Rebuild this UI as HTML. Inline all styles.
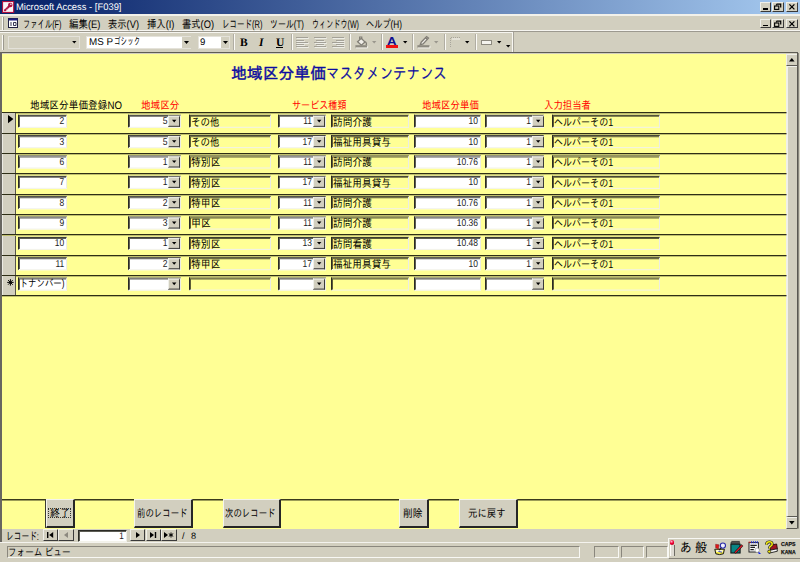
<!DOCTYPE html>
<html lang="ja"><head><meta charset="utf-8"><title>Microsoft Access - [F039]</title>
<style>
html,body{margin:0;padding:0;}
body{width:800px;height:562px;overflow:hidden;background:#d2cfbf;position:relative;
 font-family:"Liberation Sans","IPAGothic","Noto Sans CJK JP",sans-serif;font-size:11px;color:#000;}
div,span{box-sizing:border-box;}
.a{position:absolute;white-space:nowrap;}
.t{position:absolute;white-space:nowrap;line-height:12px;height:12px;transform-origin:0 0;transform:rotate(0.03deg);}
.tr{position:absolute;white-space:nowrap;line-height:12px;height:12px;text-align:right;font-size:10px;color:#1c1c1c;transform:scaleX(0.85) rotate(0.03deg);transform-origin:100% 0;}
.red{color:#ff0000;}
.sunk{position:absolute;border-style:solid;border-width:1px;border-color:#2a2a24 #ecece4 #f2f2ea #2a2a24;box-shadow:inset 1px 1px 0 rgba(30,30,20,0.72);}
.w{background:#fff;}
.y{background:#ffff95;}
.btn{position:absolute;background:#d2cfbf;border-style:solid;border-width:1px 2px 2px 1px;border-color:#f4f4ee #262626 #262626 #f4f4ee;}
.cbtn{position:absolute;background:#d2cfbf;border-style:solid;border-width:1px 1.4px 1.4px 1px;border-color:#f0f0ea #3a3a3a #3a3a3a #f0f0ea;}
.sb{border-right:0;border-bottom-color:#5c5a53;border-bottom-width:1px;}
.line{position:absolute;background:#2c2c18;height:1.2px;left:2px;width:784px;}
.sel{position:absolute;left:2px;width:14px;background:#d2cfbf;border-left:1px solid #ecebe4;border-right:1px solid #56544c;}
.sep{position:absolute;width:2px;border-left:1px solid #b0ada3;border-right:1px solid #fbfaf6;top:34px;height:16px;}
.pan{position:absolute;border-style:solid;border-width:1px;border-color:#8a877d #f8f8f4 #f8f8f4 #8a877d;top:546px;height:12px;}
svg{position:absolute;overflow:visible;}
</style></head><body>

<div class="a" style="left:0;top:0;width:800px;height:14px;background:linear-gradient(90deg,#0a246a 0%,#0c276d 6%,#a6caf0 100%);"></div>
<svg style="left:1.8px;top:0.9px" width="12.2" height="12" viewBox="0 0 12.2 12"><rect x="0" y="0" width="12.2" height="12" fill="#b01040"/><rect x="1.1" y="1.1" width="10" height="9.8" fill="#fbf4f6"/><path d="M3 9.3L7.2 5.2" stroke="#b01040" stroke-width="2.1" stroke-linecap="round" fill="none"/><path d="M3.4 7.4l1.2 1.2M4.6 6.3l1.1 1.1" stroke="#fbf4f6" stroke-width="0.5"/><circle cx="8.3" cy="4" r="2.3" fill="#b01040"/><circle cx="8.9" cy="3.3" r="0.75" fill="#fbf4f6"/></svg>
<div class="t" style="left:16.30px;top:1.2px;color:#fff;font-size:9.6px;transform:scaleX(0.9795) rotate(0.03deg)">Microsoft Access - [F039]</div>
<div class="cbtn" style="left:760px;top:2px;width:11px;height:9.8px"></div>
<div class="a" style="left:763px;top:8.3px;width:4.5px;height:1.6px;background:#000"></div>
<div class="cbtn" style="left:772px;top:2px;width:11.5px;height:9.8px"></div>
<svg style="left:772px;top:2px" width="12" height="10" viewBox="0 0 12 10"><path d="M4.5 2.2h4.2v3.2M4.5 2.2v1.2" stroke="#000" stroke-width="1.2" fill="none"/><rect x="2.6" y="4" width="4.2" height="3.4" stroke="#000" stroke-width="1.1" fill="none"/></svg>
<div class="cbtn" style="left:786px;top:2px;width:12px;height:9.8px"></div>
<svg style="left:786px;top:2px" width="12" height="10" viewBox="0 0 12 10"><path d="M3.4 2.4l5 5M8.4 2.4l-5 5" stroke="#000" stroke-width="1.3" fill="none"/></svg>
<div class="a" style="left:0;top:14px;width:800px;height:1.5px;background:#f2f1ea"></div>
<div class="a" style="left:0;top:30px;width:800px;height:1px;background:#f6f5f0"></div>
<div class="a" style="left:0;top:31px;width:800px;height:1px;background:#9c998f"></div>
<div class="a" style="left:0;top:32px;width:513px;height:1px;background:#f6f5f0"></div>
<div class="a" style="left:1.5px;top:16.6px;width:2.8px;height:13px;background:#e6e3dc;border-left:1.2px solid #fbfaf6;border-right:0.9px solid #9c998f"></div>
<div class="a" style="left:1.5px;top:34.5px;width:2.8px;height:15px;background:#e6e3dc;border-left:1.2px solid #fbfaf6;border-right:0.9px solid #9c998f"></div>
<svg style="left:8px;top:18px" width="10" height="10" viewBox="0 0 10 10"><rect x="0.5" y="0.5" width="9" height="9" fill="#fff" stroke="#202040" stroke-width="1"/><rect x="0.5" y="0.5" width="9" height="2" fill="#202080"/><path d="M2 5h2M2 7h2M5.5 4.5h2.5v3h-2.5z" stroke="#202040" stroke-width="0.9" fill="none"/></svg>
<div class="t" style="left:23.40px;top:17.5px;font-size:11px;transform:scaleX(0.6632) rotate(0.03deg)">ファイル(F)</div>
<div class="t" style="left:69.40px;top:17.5px;font-size:11px;transform:scaleX(0.8588) rotate(0.03deg)">編集(E)</div>
<div class="t" style="left:107.90px;top:17.5px;font-size:11px;transform:scaleX(0.8452) rotate(0.03deg)">表示(V)</div>
<div class="t" style="left:146.90px;top:17.5px;font-size:11px;transform:scaleX(0.8488) rotate(0.03deg)">挿入(I)</div>
<div class="t" style="left:181.90px;top:17.5px;font-size:11px;transform:scaleX(0.8444) rotate(0.03deg)">書式(O)</div>
<div class="t" style="left:221.90px;top:17.5px;font-size:11px;transform:scaleX(0.6831) rotate(0.03deg)">レコード(R)</div>
<div class="t" style="left:269.90px;top:17.5px;font-size:11px;transform:scaleX(0.7226) rotate(0.03deg)">ツール(T)</div>
<div class="t" style="left:311.90px;top:17.5px;font-size:11px;transform:scaleX(0.6463) rotate(0.03deg)">ウィンドウ(W)</div>
<div class="t" style="left:366.40px;top:17.5px;font-size:11px;transform:scaleX(0.7455) rotate(0.03deg)">ヘルプ(H)</div>
<div class="cbtn" style="left:760px;top:18.5px;width:11px;height:9.6px"></div>
<div class="a" style="left:763px;top:24.6px;width:4.5px;height:1.6px;background:#000"></div>
<div class="cbtn" style="left:772px;top:18.5px;width:11.5px;height:9.6px"></div>
<svg style="left:772px;top:18.5px" width="12" height="10" viewBox="0 0 12 10"><path d="M4.5 2.2h4.2v3.2M4.5 2.2v1.2" stroke="#000" stroke-width="1.2" fill="none"/><rect x="2.6" y="4" width="4.2" height="3.4" stroke="#000" stroke-width="1.1" fill="none"/></svg>
<div class="cbtn" style="left:786px;top:18.5px;width:12px;height:9.6px"></div>
<svg style="left:786px;top:18.5px" width="12" height="10" viewBox="0 0 12 10"><path d="M3.4 2.4l5 5M8.4 2.4l-5 5" stroke="#000" stroke-width="1.3" fill="none"/></svg>
<div class="a" style="left:511.5px;top:32px;width:2.4px;height:19.6px;border-left:1.2px solid #f8f7f2;border-right:1.2px solid #a6a399"></div>
<div class="a" style="left:8px;top:35.5px;width:72px;height:13px;background:#d2cfbf;border:1px solid #e4e2da"></div>
<svg style="left:72.3px;top:40.6px" width="4.6" height="2.6" viewBox="0 0 5 3"><path d="M0 0h5l-2.5 3z" fill="#000"/></svg>
<div class="a" style="left:86px;top:35.5px;width:105px;height:13px;background:#fff;border:1px solid #e4e2da"></div>
<div class="a" style="left:182px;top:36.5px;width:8.5px;height:11px;background:#d2cfbf"></div>
<svg style="left:184px;top:40.5px" width="5" height="3"><path d="M0 0h5l-2.5 3z" fill="#000"/></svg>
<div class="t" style="left:89px;top:36px;font-size:10px"><span style="display:inline-block;transform-origin:0 0;transform:scaleX(0.9812) rotate(0.03deg)">MS P</span></div>
<div class="t" style="left:113.60px;top:36px;font-size:10.4px;transform:scaleX(0.6351) rotate(0.03deg)">ゴシック</div>
<div class="a" style="left:197.5px;top:35.5px;width:32px;height:13px;background:#fff;border:1px solid #e4e2da"></div>
<div class="a" style="left:220.5px;top:36.5px;width:8.5px;height:11px;background:#d2cfbf"></div>
<svg style="left:222.5px;top:40.5px" width="5" height="3"><path d="M0 0h5l-2.5 3z" fill="#000"/></svg>
<div class="t" style="left:200px;top:35.5px;font-size:9.6px">9</div>
<div class="sep" style="left:233px"></div>
<div class="sep" style="left:290.5px"></div>
<div class="sep" style="left:349px"></div>
<div class="sep" style="left:380.5px"></div>
<div class="sep" style="left:412px"></div>
<div class="sep" style="left:443.5px"></div>
<div class="sep" style="left:474.5px"></div>
<div class="t" style="left:240px;top:36px;font-family:'Liberation Serif',serif;font-weight:bold;font-size:11.5px">B</div>
<div class="t" style="left:259px;top:36px;font-family:'Liberation Serif',serif;font-weight:bold;font-style:italic;font-size:11.5px">I</div>
<div class="t" style="left:275.5px;top:36px;font-family:'Liberation Serif',serif;font-weight:bold;font-size:11.5px;">U</div>
<div class="a" style="left:275.5px;top:46.5px;width:7.5px;height:1px;background:#000"></div>
<div class="a" style="left:296px;top:37.3px;width:11.5px;height:1.2px;background:#a4a197;box-shadow:0.8px 0.8px 0 #f6f5f0"></div>
<div class="a" style="left:296px;top:39.5px;width:8px;height:1.2px;background:#a4a197;box-shadow:0.8px 0.8px 0 #f6f5f0"></div>
<div class="a" style="left:296px;top:41.699999999999996px;width:11.5px;height:1.2px;background:#a4a197;box-shadow:0.8px 0.8px 0 #f6f5f0"></div>
<div class="a" style="left:296px;top:43.9px;width:8px;height:1.2px;background:#a4a197;box-shadow:0.8px 0.8px 0 #f6f5f0"></div>
<div class="a" style="left:296px;top:46.099999999999994px;width:11.5px;height:1.2px;background:#a4a197;box-shadow:0.8px 0.8px 0 #f6f5f0"></div>
<div class="a" style="left:314.0px;top:37.3px;width:11.5px;height:1.2px;background:#a4a197;box-shadow:0.8px 0.8px 0 #f6f5f0"></div>
<div class="a" style="left:315.75px;top:39.5px;width:8px;height:1.2px;background:#a4a197;box-shadow:0.8px 0.8px 0 #f6f5f0"></div>
<div class="a" style="left:314.0px;top:41.699999999999996px;width:11.5px;height:1.2px;background:#a4a197;box-shadow:0.8px 0.8px 0 #f6f5f0"></div>
<div class="a" style="left:315.75px;top:43.9px;width:8px;height:1.2px;background:#a4a197;box-shadow:0.8px 0.8px 0 #f6f5f0"></div>
<div class="a" style="left:314.0px;top:46.099999999999994px;width:11.5px;height:1.2px;background:#a4a197;box-shadow:0.8px 0.8px 0 #f6f5f0"></div>
<div class="a" style="left:332.0px;top:37.3px;width:11.5px;height:1.2px;background:#a4a197;box-shadow:0.8px 0.8px 0 #f6f5f0"></div>
<div class="a" style="left:335.5px;top:39.5px;width:8px;height:1.2px;background:#a4a197;box-shadow:0.8px 0.8px 0 #f6f5f0"></div>
<div class="a" style="left:332.0px;top:41.699999999999996px;width:11.5px;height:1.2px;background:#a4a197;box-shadow:0.8px 0.8px 0 #f6f5f0"></div>
<div class="a" style="left:335.5px;top:43.9px;width:8px;height:1.2px;background:#a4a197;box-shadow:0.8px 0.8px 0 #f6f5f0"></div>
<div class="a" style="left:332.0px;top:46.099999999999994px;width:11.5px;height:1.2px;background:#a4a197;box-shadow:0.8px 0.8px 0 #f6f5f0"></div>
<svg style="left:355px;top:36px" width="13" height="12.4" viewBox="0 0 13 12.4"><path d="M2.6 5.8l3.6-3.4 3.8 3.6-3.6 3.2z" fill="#f0eee8" stroke="#807d75" stroke-width="1.3"/><path d="M4.6 3.6v-2.6h2.2v2.2" stroke="#807d75" stroke-width="1.1" fill="none"/><path d="M10.4 5.6q1.8 2.2 0.6 3.6" stroke="#807d75" stroke-width="1.2" fill="none"/><rect x="0.4" y="9.2" width="11.8" height="2.4" fill="#8c897f"/><path d="M1 12h11.6V9.8" stroke="#f8f7f2" stroke-width="0.8" fill="none"/></svg>
<svg style="left:372.4px;top:41px" width="4.4" height="2.6" viewBox="0 0 5 3"><path d="M0 0h5l-2.5 3z" fill="#9a978d"/></svg>
<div class="t" style="left:386.5px;top:35px;font-weight:bold;font-size:11.5px;color:#101090;transform:scaleX(1.15)">A</div>
<div class="a" style="left:386px;top:45px;width:12px;height:3px;background:#f01010"></div>
<svg style="left:403.3px;top:41px" width="4.4" height="2.6" viewBox="0 0 5 3"><path d="M0 0h5l-2.5 3z" fill="#000"/></svg>
<svg style="left:417px;top:36px" width="13.4" height="12.4" viewBox="0 0 13.4 12.4"><path d="M3.2 8.8l1-2.6 5.4-5.6 1.9 1.5-5.4 5.8z" fill="#f0eee8" stroke="#807d75" stroke-width="1.3"/><path d="M8.4 1.6l1.8 1.6" stroke="#807d75" stroke-width="1.6"/><rect x="0.4" y="9.2" width="12.2" height="2.4" fill="#8c897f"/><path d="M1 12h12V9.8" stroke="#f8f7f2" stroke-width="0.8" fill="none"/></svg>
<svg style="left:434.4px;top:41px" width="4.4" height="2.6" viewBox="0 0 5 3"><path d="M0 0h5l-2.5 3z" fill="#9a978d"/></svg>
<svg style="left:448.5px;top:36px" width="12" height="12" viewBox="0 0 12 12"><path d="M1.5 11V1.5H11" stroke="#a8a59b" stroke-width="1" stroke-dasharray="1 1" fill="none"/><path d="M3 3h8" stroke="#f4f3ee" stroke-width="1"/></svg>
<svg style="left:465.3px;top:41px" width="4.4" height="2.6" viewBox="0 0 5 3"><path d="M0 0h5l-2.5 3z" fill="#000"/></svg>
<div class="a" style="left:480.5px;top:40px;width:11px;height:4.5px;background:#f4f3ee;border:1px solid #8c897f"></div>
<svg style="left:496.8px;top:41px" width="4.4" height="2.6" viewBox="0 0 5 3"><path d="M0 0h5l-2.5 3z" fill="#000"/></svg>
<svg style="left:506px;top:44.5px" width="4.4" height="2.6"><path d="M0 0h4.4l-2.2 2.6z" fill="#000"/></svg>
<div class="a" style="left:0;top:52px;width:800px;height:490px;background:#d2cfbf"></div>
<div class="a" style="left:0;top:51.8px;width:798.2px;height:1.7px;background:#5e5c55"></div>
<div class="a" style="left:0;top:52px;width:1.5px;height:489.5px;background:#686660"></div>
<svg style="left:797px;top:53px" width="1.6" height="475.6"><rect x="0" y="0" width="1.6" height="475.6" fill="#5a5851"/></svg>
<div class="a" style="left:1.5px;top:53.5px;width:784.5px;height:475px;background:#ffff95"></div>
<div class="a" style="left:786px;top:53.5px;width:11px;height:475px;background:#d2cfbf"></div>
<div class="cbtn sb" style="left:786px;top:53.5px;width:11px;height:12px"></div>
<svg style="left:788.7px;top:57.5px" width="5.6" height="3.4"><path d="M0 3.4h5.6l-2.8-3.4z" fill="#000"/></svg>
<div class="cbtn sb" style="left:786px;top:65.5px;width:11px;height:451px;border-left-width:2px"></div>
<div class="cbtn sb" style="left:786px;top:516.5px;width:11px;height:12px"></div>
<svg style="left:788.7px;top:521px" width="5.6" height="3.4"><path d="M0 0h5.6l-2.8 3.4z" fill="#000"/></svg>
<div class="t" style="left:231.00px;top:65px;height:18px;line-height:18px;font-size:16px;color:#0c0ca0;-webkit-text-stroke:0.45px #0c0ca0;transform:scaleX(0.9895) rotate(0.03deg)">地域区分単価</div>
<div class="t" style="left:326.00px;top:65px;height:18px;line-height:18px;font-size:16px;color:#0c0ca0;-webkit-text-stroke:0.15px #0c0ca0;transform:scaleX(0.8388) rotate(0.03deg)">マスタメンテナンス</div>
<div class="t" style="left:30.40px;top:99.1px;font-size:11px;transform:scaleX(0.8803) rotate(0.03deg)">地域区分単価登録NO</div>
<div class="t red" style="left:141.40px;top:99.1px;font-size:11px;transform:scaleX(0.8749) rotate(0.03deg)">地域区分</div>
<div class="t red" style="left:291.90px;top:99.1px;font-size:11px;transform:scaleX(0.8257) rotate(0.03deg)">サービス種類</div>
<div class="t red" style="left:421.90px;top:99.1px;font-size:11px;transform:scaleX(0.8636) rotate(0.03deg)">地域区分単価</div>
<div class="t red" style="left:543.90px;top:99.1px;font-size:11px;transform:scaleX(0.8544) rotate(0.03deg)">入力担当者</div>
<svg style="left:1.5px;top:112.20px" width="784.5" height="1.3"><rect x="0" y="0" width="784.5" height="1.3" fill="#2e2e16"/></svg>
<svg style="left:1.5px;top:132.55px" width="784.5" height="1.3"><rect x="0" y="0" width="784.5" height="1.3" fill="#2e2e16"/></svg>
<svg style="left:1.5px;top:152.90px" width="784.5" height="1.3"><rect x="0" y="0" width="784.5" height="1.3" fill="#2e2e16"/></svg>
<svg style="left:1.5px;top:173.25px" width="784.5" height="1.3"><rect x="0" y="0" width="784.5" height="1.3" fill="#2e2e16"/></svg>
<svg style="left:1.5px;top:193.60px" width="784.5" height="1.3"><rect x="0" y="0" width="784.5" height="1.3" fill="#2e2e16"/></svg>
<svg style="left:1.5px;top:213.95px" width="784.5" height="1.3"><rect x="0" y="0" width="784.5" height="1.3" fill="#2e2e16"/></svg>
<svg style="left:1.5px;top:234.30px" width="784.5" height="1.3"><rect x="0" y="0" width="784.5" height="1.3" fill="#2e2e16"/></svg>
<svg style="left:1.5px;top:254.65px" width="784.5" height="1.3"><rect x="0" y="0" width="784.5" height="1.3" fill="#2e2e16"/></svg>
<svg style="left:1.5px;top:275.00px" width="784.5" height="1.3"><rect x="0" y="0" width="784.5" height="1.3" fill="#2e2e16"/></svg>
<svg style="left:1.5px;top:295.35px" width="784.5" height="1.3"><rect x="0" y="0" width="784.5" height="1.3" fill="#2e2e16"/></svg>
<div class="sel" style="top:113.40px;height:19.15px"></div>
<svg style="left:8px;top:115.00px" width="5.4" height="8.2"><path d="M0 0l5.4 4.1-5.4 4.1z" fill="#000"/></svg>
<div class="a" style="left:0;top:0;width:700px;height:14px;transform:translateY(114.80px)">
<div class="sunk w" style="left:18px;top:0;width:48.5px;height:13px"></div>
<div class="sunk w" style="left:127.7px;top:0;width:53.5px;height:13px"></div>
<div class="cbtn" style="left:168px;top:1px;width:12px;height:11.4px"></div>
<svg style="left:172px;top:5.4px" width="4.4" height="2.6"><path d="M0 0h4.4l-2.2 2.6z" fill="#000"/></svg>
<div class="sunk y" style="left:189px;top:0;width:81.5px;height:13px"></div>
<div class="sunk w" style="left:277.7px;top:0;width:48px;height:13px"></div>
<div class="cbtn" style="left:313px;top:1px;width:12px;height:11.4px"></div>
<svg style="left:316.8px;top:5.4px" width="4.4" height="2.6"><path d="M0 0h4.4l-2.2 2.6z" fill="#000"/></svg>
<div class="sunk y" style="left:330.5px;top:0;width:78.5px;height:13px"></div>
<div class="sunk w" style="left:413.7px;top:0;width:67px;height:13px"></div>
<div class="sunk w" style="left:484.7px;top:0;width:59.5px;height:13px"></div>
<div class="cbtn" style="left:532px;top:1px;width:12px;height:11.4px"></div>
<svg style="left:535.8px;top:5.4px" width="4.4" height="2.6"><path d="M0 0h4.4l-2.2 2.6z" fill="#000"/></svg>
<div class="sunk y" style="left:552.3px;top:0;width:108px;height:13px"></div>
</div>
<div class="tr" style="left:20px;width:44.3px;top:115.30px">2</div>
<div class="tr" style="left:130px;width:37.4px;top:115.30px">5</div>
<div class="t" style="left:190.80px;top:115.60px;transform:scaleX(0.8635) rotate(0.03deg)">その他</div>
<div class="tr" style="left:280px;width:32px;top:115.30px">11</div>
<div class="t" style="left:332.50px;top:115.60px;transform:scaleX(0.8862) rotate(0.03deg)">訪問介護</div>
<div class="tr" style="left:416px;width:62px;top:115.30px">10</div>
<div class="tr" style="left:487px;width:44px;top:115.30px">1</div>
<div class="t" style="left:554.30px;top:115.60px;transform:scaleX(0.8207) rotate(0.03deg)">ヘルパーその1</div>
<div class="sel" style="top:133.75px;height:19.15px"></div>
<div class="a" style="left:0;top:0;width:700px;height:14px;transform:translateY(135.15px)">
<div class="sunk w" style="left:18px;top:0;width:48.5px;height:13px"></div>
<div class="sunk w" style="left:127.7px;top:0;width:53.5px;height:13px"></div>
<div class="cbtn" style="left:168px;top:1px;width:12px;height:11.4px"></div>
<svg style="left:172px;top:5.4px" width="4.4" height="2.6"><path d="M0 0h4.4l-2.2 2.6z" fill="#000"/></svg>
<div class="sunk y" style="left:189px;top:0;width:81.5px;height:13px"></div>
<div class="sunk w" style="left:277.7px;top:0;width:48px;height:13px"></div>
<div class="cbtn" style="left:313px;top:1px;width:12px;height:11.4px"></div>
<svg style="left:316.8px;top:5.4px" width="4.4" height="2.6"><path d="M0 0h4.4l-2.2 2.6z" fill="#000"/></svg>
<div class="sunk y" style="left:330.5px;top:0;width:78.5px;height:13px"></div>
<div class="sunk w" style="left:413.7px;top:0;width:67px;height:13px"></div>
<div class="sunk w" style="left:484.7px;top:0;width:59.5px;height:13px"></div>
<div class="cbtn" style="left:532px;top:1px;width:12px;height:11.4px"></div>
<svg style="left:535.8px;top:5.4px" width="4.4" height="2.6"><path d="M0 0h4.4l-2.2 2.6z" fill="#000"/></svg>
<div class="sunk y" style="left:552.3px;top:0;width:108px;height:13px"></div>
</div>
<div class="tr" style="left:20px;width:44.3px;top:135.65px">3</div>
<div class="tr" style="left:130px;width:37.4px;top:135.65px">5</div>
<div class="t" style="left:190.80px;top:135.95px;transform:scaleX(0.8635) rotate(0.03deg)">その他</div>
<div class="tr" style="left:280px;width:32px;top:135.65px">17</div>
<div class="t" style="left:332.50px;top:135.95px;transform:scaleX(0.8787) rotate(0.03deg)">福祉用具貸与</div>
<div class="tr" style="left:416px;width:62px;top:135.65px">10</div>
<div class="tr" style="left:487px;width:44px;top:135.65px">1</div>
<div class="t" style="left:554.30px;top:135.95px;transform:scaleX(0.8207) rotate(0.03deg)">ヘルパーその1</div>
<div class="sel" style="top:154.10px;height:19.15px"></div>
<div class="a" style="left:0;top:0;width:700px;height:14px;transform:translateY(155.50px)">
<div class="sunk w" style="left:18px;top:0;width:48.5px;height:13px"></div>
<div class="sunk w" style="left:127.7px;top:0;width:53.5px;height:13px"></div>
<div class="cbtn" style="left:168px;top:1px;width:12px;height:11.4px"></div>
<svg style="left:172px;top:5.4px" width="4.4" height="2.6"><path d="M0 0h4.4l-2.2 2.6z" fill="#000"/></svg>
<div class="sunk y" style="left:189px;top:0;width:81.5px;height:13px"></div>
<div class="sunk w" style="left:277.7px;top:0;width:48px;height:13px"></div>
<div class="cbtn" style="left:313px;top:1px;width:12px;height:11.4px"></div>
<svg style="left:316.8px;top:5.4px" width="4.4" height="2.6"><path d="M0 0h4.4l-2.2 2.6z" fill="#000"/></svg>
<div class="sunk y" style="left:330.5px;top:0;width:78.5px;height:13px"></div>
<div class="sunk w" style="left:413.7px;top:0;width:67px;height:13px"></div>
<div class="sunk w" style="left:484.7px;top:0;width:59.5px;height:13px"></div>
<div class="cbtn" style="left:532px;top:1px;width:12px;height:11.4px"></div>
<svg style="left:535.8px;top:5.4px" width="4.4" height="2.6"><path d="M0 0h4.4l-2.2 2.6z" fill="#000"/></svg>
<div class="sunk y" style="left:552.3px;top:0;width:108px;height:13px"></div>
</div>
<div class="tr" style="left:20px;width:44.3px;top:156.00px">6</div>
<div class="tr" style="left:130px;width:37.4px;top:156.00px">1</div>
<div class="t" style="left:190.80px;top:156.30px;transform:scaleX(0.8938) rotate(0.03deg)">特別区</div>
<div class="tr" style="left:280px;width:32px;top:156.00px">11</div>
<div class="t" style="left:332.50px;top:156.30px;transform:scaleX(0.8862) rotate(0.03deg)">訪問介護</div>
<div class="tr" style="left:416px;width:62px;top:156.00px">10.76</div>
<div class="tr" style="left:487px;width:44px;top:156.00px">1</div>
<div class="t" style="left:554.30px;top:156.30px;transform:scaleX(0.8207) rotate(0.03deg)">ヘルパーその1</div>
<div class="sel" style="top:174.45px;height:19.15px"></div>
<div class="a" style="left:0;top:0;width:700px;height:14px;transform:translateY(175.85px)">
<div class="sunk w" style="left:18px;top:0;width:48.5px;height:13px"></div>
<div class="sunk w" style="left:127.7px;top:0;width:53.5px;height:13px"></div>
<div class="cbtn" style="left:168px;top:1px;width:12px;height:11.4px"></div>
<svg style="left:172px;top:5.4px" width="4.4" height="2.6"><path d="M0 0h4.4l-2.2 2.6z" fill="#000"/></svg>
<div class="sunk y" style="left:189px;top:0;width:81.5px;height:13px"></div>
<div class="sunk w" style="left:277.7px;top:0;width:48px;height:13px"></div>
<div class="cbtn" style="left:313px;top:1px;width:12px;height:11.4px"></div>
<svg style="left:316.8px;top:5.4px" width="4.4" height="2.6"><path d="M0 0h4.4l-2.2 2.6z" fill="#000"/></svg>
<div class="sunk y" style="left:330.5px;top:0;width:78.5px;height:13px"></div>
<div class="sunk w" style="left:413.7px;top:0;width:67px;height:13px"></div>
<div class="sunk w" style="left:484.7px;top:0;width:59.5px;height:13px"></div>
<div class="cbtn" style="left:532px;top:1px;width:12px;height:11.4px"></div>
<svg style="left:535.8px;top:5.4px" width="4.4" height="2.6"><path d="M0 0h4.4l-2.2 2.6z" fill="#000"/></svg>
<div class="sunk y" style="left:552.3px;top:0;width:108px;height:13px"></div>
</div>
<div class="tr" style="left:20px;width:44.3px;top:176.35px">7</div>
<div class="tr" style="left:130px;width:37.4px;top:176.35px">1</div>
<div class="t" style="left:190.80px;top:176.65px;transform:scaleX(0.8938) rotate(0.03deg)">特別区</div>
<div class="tr" style="left:280px;width:32px;top:176.35px">17</div>
<div class="t" style="left:332.50px;top:176.65px;transform:scaleX(0.8787) rotate(0.03deg)">福祉用具貸与</div>
<div class="tr" style="left:416px;width:62px;top:176.35px">10</div>
<div class="tr" style="left:487px;width:44px;top:176.35px">1</div>
<div class="t" style="left:554.30px;top:176.65px;transform:scaleX(0.8207) rotate(0.03deg)">ヘルパーその1</div>
<div class="sel" style="top:194.80px;height:19.15px"></div>
<div class="a" style="left:0;top:0;width:700px;height:14px;transform:translateY(196.20px)">
<div class="sunk w" style="left:18px;top:0;width:48.5px;height:13px"></div>
<div class="sunk w" style="left:127.7px;top:0;width:53.5px;height:13px"></div>
<div class="cbtn" style="left:168px;top:1px;width:12px;height:11.4px"></div>
<svg style="left:172px;top:5.4px" width="4.4" height="2.6"><path d="M0 0h4.4l-2.2 2.6z" fill="#000"/></svg>
<div class="sunk y" style="left:189px;top:0;width:81.5px;height:13px"></div>
<div class="sunk w" style="left:277.7px;top:0;width:48px;height:13px"></div>
<div class="cbtn" style="left:313px;top:1px;width:12px;height:11.4px"></div>
<svg style="left:316.8px;top:5.4px" width="4.4" height="2.6"><path d="M0 0h4.4l-2.2 2.6z" fill="#000"/></svg>
<div class="sunk y" style="left:330.5px;top:0;width:78.5px;height:13px"></div>
<div class="sunk w" style="left:413.7px;top:0;width:67px;height:13px"></div>
<div class="sunk w" style="left:484.7px;top:0;width:59.5px;height:13px"></div>
<div class="cbtn" style="left:532px;top:1px;width:12px;height:11.4px"></div>
<svg style="left:535.8px;top:5.4px" width="4.4" height="2.6"><path d="M0 0h4.4l-2.2 2.6z" fill="#000"/></svg>
<div class="sunk y" style="left:552.3px;top:0;width:108px;height:13px"></div>
</div>
<div class="tr" style="left:20px;width:44.3px;top:196.70px">8</div>
<div class="tr" style="left:130px;width:37.4px;top:196.70px">2</div>
<div class="t" style="left:190.80px;top:197.00px;transform:scaleX(0.8938) rotate(0.03deg)">特甲区</div>
<div class="tr" style="left:280px;width:32px;top:196.70px">11</div>
<div class="t" style="left:332.50px;top:197.00px;transform:scaleX(0.8862) rotate(0.03deg)">訪問介護</div>
<div class="tr" style="left:416px;width:62px;top:196.70px">10.76</div>
<div class="tr" style="left:487px;width:44px;top:196.70px">1</div>
<div class="t" style="left:554.30px;top:197.00px;transform:scaleX(0.8207) rotate(0.03deg)">ヘルパーその1</div>
<div class="sel" style="top:215.15px;height:19.15px"></div>
<div class="a" style="left:0;top:0;width:700px;height:14px;transform:translateY(216.55px)">
<div class="sunk w" style="left:18px;top:0;width:48.5px;height:13px"></div>
<div class="sunk w" style="left:127.7px;top:0;width:53.5px;height:13px"></div>
<div class="cbtn" style="left:168px;top:1px;width:12px;height:11.4px"></div>
<svg style="left:172px;top:5.4px" width="4.4" height="2.6"><path d="M0 0h4.4l-2.2 2.6z" fill="#000"/></svg>
<div class="sunk y" style="left:189px;top:0;width:81.5px;height:13px"></div>
<div class="sunk w" style="left:277.7px;top:0;width:48px;height:13px"></div>
<div class="cbtn" style="left:313px;top:1px;width:12px;height:11.4px"></div>
<svg style="left:316.8px;top:5.4px" width="4.4" height="2.6"><path d="M0 0h4.4l-2.2 2.6z" fill="#000"/></svg>
<div class="sunk y" style="left:330.5px;top:0;width:78.5px;height:13px"></div>
<div class="sunk w" style="left:413.7px;top:0;width:67px;height:13px"></div>
<div class="sunk w" style="left:484.7px;top:0;width:59.5px;height:13px"></div>
<div class="cbtn" style="left:532px;top:1px;width:12px;height:11.4px"></div>
<svg style="left:535.8px;top:5.4px" width="4.4" height="2.6"><path d="M0 0h4.4l-2.2 2.6z" fill="#000"/></svg>
<div class="sunk y" style="left:552.3px;top:0;width:108px;height:13px"></div>
</div>
<div class="tr" style="left:20px;width:44.3px;top:217.05px">9</div>
<div class="tr" style="left:130px;width:37.4px;top:217.05px">3</div>
<div class="t" style="left:190.80px;top:217.35px;transform:scaleX(0.9088) rotate(0.03deg)">甲区</div>
<div class="tr" style="left:280px;width:32px;top:217.05px">11</div>
<div class="t" style="left:332.50px;top:217.35px;transform:scaleX(0.8862) rotate(0.03deg)">訪問介護</div>
<div class="tr" style="left:416px;width:62px;top:217.05px">10.36</div>
<div class="tr" style="left:487px;width:44px;top:217.05px">1</div>
<div class="t" style="left:554.30px;top:217.35px;transform:scaleX(0.8207) rotate(0.03deg)">ヘルパーその1</div>
<div class="sel" style="top:235.50px;height:19.15px"></div>
<div class="a" style="left:0;top:0;width:700px;height:14px;transform:translateY(236.90px)">
<div class="sunk w" style="left:18px;top:0;width:48.5px;height:13px"></div>
<div class="sunk w" style="left:127.7px;top:0;width:53.5px;height:13px"></div>
<div class="cbtn" style="left:168px;top:1px;width:12px;height:11.4px"></div>
<svg style="left:172px;top:5.4px" width="4.4" height="2.6"><path d="M0 0h4.4l-2.2 2.6z" fill="#000"/></svg>
<div class="sunk y" style="left:189px;top:0;width:81.5px;height:13px"></div>
<div class="sunk w" style="left:277.7px;top:0;width:48px;height:13px"></div>
<div class="cbtn" style="left:313px;top:1px;width:12px;height:11.4px"></div>
<svg style="left:316.8px;top:5.4px" width="4.4" height="2.6"><path d="M0 0h4.4l-2.2 2.6z" fill="#000"/></svg>
<div class="sunk y" style="left:330.5px;top:0;width:78.5px;height:13px"></div>
<div class="sunk w" style="left:413.7px;top:0;width:67px;height:13px"></div>
<div class="sunk w" style="left:484.7px;top:0;width:59.5px;height:13px"></div>
<div class="cbtn" style="left:532px;top:1px;width:12px;height:11.4px"></div>
<svg style="left:535.8px;top:5.4px" width="4.4" height="2.6"><path d="M0 0h4.4l-2.2 2.6z" fill="#000"/></svg>
<div class="sunk y" style="left:552.3px;top:0;width:108px;height:13px"></div>
</div>
<div class="tr" style="left:20px;width:44.3px;top:237.40px">10</div>
<div class="tr" style="left:130px;width:37.4px;top:237.40px">1</div>
<div class="t" style="left:190.80px;top:237.70px;transform:scaleX(0.8938) rotate(0.03deg)">特別区</div>
<div class="tr" style="left:280px;width:32px;top:237.40px">13</div>
<div class="t" style="left:332.50px;top:237.70px;transform:scaleX(0.8862) rotate(0.03deg)">訪問看護</div>
<div class="tr" style="left:416px;width:62px;top:237.40px">10.48</div>
<div class="tr" style="left:487px;width:44px;top:237.40px">1</div>
<div class="t" style="left:554.30px;top:237.70px;transform:scaleX(0.8207) rotate(0.03deg)">ヘルパーその1</div>
<div class="sel" style="top:255.85px;height:19.15px"></div>
<div class="a" style="left:0;top:0;width:700px;height:14px;transform:translateY(257.25px)">
<div class="sunk w" style="left:18px;top:0;width:48.5px;height:13px"></div>
<div class="sunk w" style="left:127.7px;top:0;width:53.5px;height:13px"></div>
<div class="cbtn" style="left:168px;top:1px;width:12px;height:11.4px"></div>
<svg style="left:172px;top:5.4px" width="4.4" height="2.6"><path d="M0 0h4.4l-2.2 2.6z" fill="#000"/></svg>
<div class="sunk y" style="left:189px;top:0;width:81.5px;height:13px"></div>
<div class="sunk w" style="left:277.7px;top:0;width:48px;height:13px"></div>
<div class="cbtn" style="left:313px;top:1px;width:12px;height:11.4px"></div>
<svg style="left:316.8px;top:5.4px" width="4.4" height="2.6"><path d="M0 0h4.4l-2.2 2.6z" fill="#000"/></svg>
<div class="sunk y" style="left:330.5px;top:0;width:78.5px;height:13px"></div>
<div class="sunk w" style="left:413.7px;top:0;width:67px;height:13px"></div>
<div class="sunk w" style="left:484.7px;top:0;width:59.5px;height:13px"></div>
<div class="cbtn" style="left:532px;top:1px;width:12px;height:11.4px"></div>
<svg style="left:535.8px;top:5.4px" width="4.4" height="2.6"><path d="M0 0h4.4l-2.2 2.6z" fill="#000"/></svg>
<div class="sunk y" style="left:552.3px;top:0;width:108px;height:13px"></div>
</div>
<div class="tr" style="left:20px;width:44.3px;top:257.75px">11</div>
<div class="tr" style="left:130px;width:37.4px;top:257.75px">2</div>
<div class="t" style="left:190.80px;top:258.05px;transform:scaleX(0.8938) rotate(0.03deg)">特甲区</div>
<div class="tr" style="left:280px;width:32px;top:257.75px">17</div>
<div class="t" style="left:332.50px;top:258.05px;transform:scaleX(0.8787) rotate(0.03deg)">福祉用具貸与</div>
<div class="tr" style="left:416px;width:62px;top:257.75px">10</div>
<div class="tr" style="left:487px;width:44px;top:257.75px">1</div>
<div class="t" style="left:554.30px;top:258.05px;transform:scaleX(0.8207) rotate(0.03deg)">ヘルパーその1</div>
<div class="sel" style="top:276.20px;height:19.15px"></div>
<svg style="left:6.6px;top:278.60px" width="6.8" height="6.8" viewBox="-3.4 -3.4 6.8 6.8"><path d="M-3.2 0H3.2M0 -3.2V3.2M-2.3 -2.3L2.3 2.3M2.3 -2.3L-2.3 2.3" stroke="#000" stroke-width="1" fill="none"/></svg>
<div class="a" style="left:0;top:0;width:700px;height:14px;transform:translateY(277.60px)">
<div class="sunk w" style="left:18px;top:0;width:48.5px;height:13px"></div>
<div class="sunk w" style="left:127.7px;top:0;width:53.5px;height:13px"></div>
<div class="cbtn" style="left:168px;top:1px;width:12px;height:11.4px"></div>
<svg style="left:172px;top:5.4px" width="4.4" height="2.6"><path d="M0 0h4.4l-2.2 2.6z" fill="#000"/></svg>
<div class="sunk y" style="left:189px;top:0;width:81.5px;height:13px"></div>
<div class="sunk w" style="left:277.7px;top:0;width:48px;height:13px"></div>
<div class="cbtn" style="left:313px;top:1px;width:12px;height:11.4px"></div>
<svg style="left:316.8px;top:5.4px" width="4.4" height="2.6"><path d="M0 0h4.4l-2.2 2.6z" fill="#000"/></svg>
<div class="sunk y" style="left:330.5px;top:0;width:78.5px;height:13px"></div>
<div class="sunk w" style="left:413.7px;top:0;width:67px;height:13px"></div>
<div class="sunk w" style="left:484.7px;top:0;width:59.5px;height:13px"></div>
<div class="cbtn" style="left:532px;top:1px;width:12px;height:11.4px"></div>
<svg style="left:535.8px;top:5.4px" width="4.4" height="2.6"><path d="M0 0h4.4l-2.2 2.6z" fill="#000"/></svg>
<div class="sunk y" style="left:552.3px;top:0;width:108px;height:13px"></div>
</div>
<div class="a" style="left:19.8px;top:278.40px;width:45.6px;height:12px;overflow:hidden"><div class="t" style="right:0.6px;top:-1px;font-size:10.5px;transform:scaleX(0.8);transform-origin:100% 0">(オートナンバー)</div></div>
<svg style="left:1.5px;top:498.5px" width="784.5" height="1.5"><rect x="0" y="0" width="784.5" height="1.5" fill="#3a3a1c"/></svg>
<div class="btn" style="left:45.5px;top:499px;width:29.099999999999994px;height:29px;box-shadow:-1px 0 0 #3a3a30"></div>
<div class="t" style="left:49.60px;top:506.6px;font-size:11px;transform:scaleX(0.8997) rotate(0.03deg)">終了</div>
<div class="btn" style="left:134px;top:499px;width:58.5px;height:29px"></div>
<div class="t" style="left:136.90px;top:506.6px;font-size:11px;transform:scaleX(0.7651) rotate(0.03deg)">前のレコード</div>
<div class="btn" style="left:223px;top:499px;width:58px;height:29px"></div>
<div class="t" style="left:225.40px;top:506.6px;font-size:11px;transform:scaleX(0.7651) rotate(0.03deg)">次のレコード</div>
<div class="btn" style="left:399.2px;top:499px;width:29.5px;height:29px"></div>
<div class="t" style="left:403.10px;top:506.6px;font-size:11px;transform:scaleX(0.8770) rotate(0.03deg)">削除</div>
<div class="btn" style="left:458.7px;top:499px;width:58.900000000000034px;height:29px"></div>
<div class="t" style="left:468.40px;top:506.6px;font-size:11px;transform:scaleX(0.8567) rotate(0.03deg)">元に戻す</div>
<div class="a" style="left:48px;top:507.5px;width:22.7px;height:10px;border:1px dotted #333"></div>
<div class="a" style="left:1.5px;top:528.5px;width:798.5px;height:13.2px;background:#d2cfbf"></div>
<div class="t" style="left:5.80px;top:529.5px;font-size:11px;transform:scaleX(0.7011) rotate(0.03deg)">レコード:</div>
<div class="cbtn" style="left:43px;top:529.3px;width:15px;height:11.7px"></div>
<svg style="left:46.9px;top:532.1px" width="7" height="6"><rect x="0" y="0" width="1.4" height="6" fill="#000"/><path d="M6.2 0v6l-4-3z" fill="#000"/></svg>
<div class="cbtn" style="left:58.3px;top:529.3px;width:15.3px;height:11.7px"></div>
<svg style="left:63.550000000000004px;top:532.1px" width="5" height="6"><path d="M4 0v6l-4-3z" fill="#8c897f"/></svg>
<div class="sunk w" style="left:77.5px;top:529.5px;width:49px;height:12px"></div>
<div class="tr" style="left:80px;width:43.7px;top:529.8px;font-size:9.6px">1</div>
<div class="cbtn" style="left:130.2px;top:529.3px;width:15.3px;height:11.7px"></div>
<svg style="left:135.85px;top:532.1px" width="5" height="6"><path d="M0 0v6l4-3z" fill="#000"/></svg>
<div class="cbtn" style="left:145.6px;top:529.3px;width:15.4px;height:11.7px"></div>
<svg style="left:149.7px;top:532.1px" width="7" height="6"><path d="M0 0v6l4-3z" fill="#000"/><rect x="4.8" y="0" width="1.4" height="6" fill="#000"/></svg>
<div class="cbtn" style="left:161.1px;top:529.3px;width:15.8px;height:11.7px"></div>
<svg style="left:164.2px;top:532.1px" width="10" height="6"><path d="M0 0v6l4-3z" fill="#000"/><path d="M7 0.5v5M4.8 1.7l4.4 2.6M9.2 1.7l-4.4 2.6" stroke="#000" stroke-width="1" fill="none"/></svg>
<div class="t" style="left:182.3px;top:529.6px;font-size:9.2px;letter-spacing:1.9px">/ 8</div>
<div class="a" style="left:0;top:541.7px;width:800px;height:20.3px;background:#d2cfbf"></div>
<div class="a" style="left:0;top:542.2px;width:800px;height:1.2px;background:#f4f3ee"></div>
<div class="pan" style="left:7px;width:573px"></div>
<div class="t" style="left:7.90px;top:546.4px;font-size:11px;transform:scaleX(0.7806) rotate(0.03deg)">フォーム ビュー</div>
<div class="pan" style="left:594.2px;width:24.59999999999991px"></div>
<div class="pan" style="left:621.2px;width:22.799999999999955px"></div>
<div class="pan" style="left:646.2px;width:21.799999999999955px"></div>
<div class="a" style="left:668px;top:538px;width:132px;height:20.8px;background:#d2cfbf;border-top:1.2px solid #f8f8f4;border-left:1.2px solid #f8f8f4;border-bottom:1.2px solid #86837a"></div>
<div class="a" style="left:669.7px;top:540.4px;width:4.8px;height:4.4px;border-radius:50%;background:radial-gradient(circle at 38% 32%,#ffb0d0 0%,#f00030 45%,#a00028 100%)"></div>
<div class="a" style="left:670.3px;top:545.4px;width:4.4px;height:11px;background:#dedbd3;border-left:1.3px solid #fbfaf6;border-right:1.1px solid #6e6c64;"></div>
<div class="t" style="left:679.6px;top:541.4px;font-size:13px;line-height:14px;height:14px;transform:scaleX(0.9)">あ</div>
<div class="t" style="left:695.4px;top:541.4px;font-size:13px;line-height:14px;height:14px;transform:scaleX(0.94)">般</div>
<svg style="left:713.8px;top:541.6px" width="12.4" height="13.6" viewBox="0 0 12.4 13.6"><path d="M0.8 7.2h9.6l-1 4.6q-3.8 1.6-7.6 0z" fill="#f4ea40" stroke="#181818" stroke-width="1"/><path d="M2.2 8.2h6.6v1.6h-6.6z" fill="#fff"/><path d="M1.6 2.2l3.4 0.6-0.6 4.2-2.8-1.2z" fill="#e01818" stroke="#701010" stroke-width="0.4"/><circle cx="8.9" cy="3.6" r="2.6" fill="#f0f0fa" stroke="#2828a8" stroke-width="1.1"/><path d="M7.2 5.8l-2 2.4" stroke="#181818" stroke-width="1.1"/><path d="M4.4 9.4l3.6 0.8" stroke="#2030c0" stroke-width="0.9"/></svg>
<svg style="left:730px;top:541.4px" width="13.4" height="13" viewBox="0 0 13.4 13"><path d="M1 1.4h8.6v1.2H1zM1.4 0.4h8.4" fill="#f4f4f4" stroke="#181818" stroke-width="0.8"/><rect x="0.9" y="3.2" width="9.2" height="8.8" fill="#0a8484" stroke="#101818" stroke-width="1.1"/><path d="M4.8 12l7.6-7.8" stroke="#181818" stroke-width="2.4"/><path d="M5.2 11.6l7-7.2" stroke="#f01828" stroke-width="1.3"/></svg>
<svg style="left:747.6px;top:541.4px" width="13.4" height="13" viewBox="0 0 13.4 13"><rect x="1" y="1.6" width="9.4" height="9.4" fill="#f6f6f6" stroke="#202020" stroke-width="1"/><path d="M3.6 0.2v2M5.6 0.2v2M7.6 0.2v2M9.4 0.2v2" stroke="#1828d0" stroke-width="1"/><path d="M0.6 1.2h2" stroke="#d02020" stroke-width="1"/><path d="M2.4 4.4h6.4M2.4 6.4h4.6M2.4 8.6h3.4" stroke="#202020" stroke-width="1.1"/><circle cx="9.2" cy="9.2" r="2.2" fill="#fff" stroke="#8a8a8a" stroke-width="0.6"/><path d="M10.6 13v-2.4l2.4 2.4z" fill="#1020f0"/></svg>
<svg style="left:764.6px;top:541.4px" width="13" height="13.4" viewBox="0 0 13 13.4"><path d="M5 4.4l6.6-1.4 0.8 5-6.8 1.6z" fill="#a01424" stroke="#280808" stroke-width="0.9"/><path d="M3.4 9.6l8.6-1.8 0.4 2.4-8.4 2z" fill="#f6f6f6" stroke="#181818" stroke-width="0.9"/><path d="M1.4 3.6q0.2-2.8 3-2.8 2.8 0 2.8 2.2 0 1.4-1.8 2.4-1 0.6-1 2" stroke="#181818" stroke-width="2.8" fill="none"/><path d="M1.4 3.6q0.2-2.8 3-2.8 2.8 0 2.8 2.2 0 1.4-1.8 2.4-1 0.6-1 2" stroke="#f8ee10" stroke-width="1.5" fill="none"/><circle cx="4.2" cy="10.6" r="1.5" fill="#f8ee10" stroke="#181818" stroke-width="0.7"/></svg>
<div class="t" style="left:781px;top:540.6px;font-size:5.6px;font-weight:bold;line-height:7px;height:7px;letter-spacing:0.05px;color:#111;-webkit-text-stroke:0.25px #111;transform:scaleX(0.93)">CAPS</div>
<div class="t" style="left:781px;top:549px;font-size:5.6px;font-weight:bold;line-height:7px;height:7px;color:#111;-webkit-text-stroke:0.25px #111;transform:scaleX(0.9)">KANA</div>
</body></html>
